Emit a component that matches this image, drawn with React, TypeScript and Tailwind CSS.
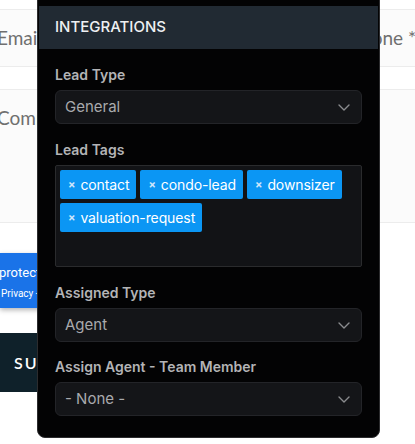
import React from 'react';

function Chevron() {
  return (
    <svg width="12" height="7" viewBox="0 0 12 7" fill="none" className="shrink-0">
      <path d="M1 1l5 5 5-5" stroke="#8a8b8e" strokeWidth="1.4" strokeLinecap="round" strokeLinejoin="round" />
    </svg>
  );
}

function Label({ children, className = '' }: { children: React.ReactNode; className?: string }) {
  return <div className={`h-5 leading-5 text-[14px] font-semibold text-[#b3b4b6] mb-[5px] ${className}`}>{children}</div>;
}

function Select({ value }: { value: string }) {
  return (
    <div className="h-[34px] flex items-center justify-between pl-[9px] pr-[11px] rounded-md bg-[#141518] border border-[#232428]">
      <span className="text-[15px] text-[#a9aaad]">{value}</span>
      <Chevron />
    </div>
  );
}

function Tag({ text }: { text: string }) {
  return (
    <span className="h-[29px] flex items-center gap-[5px] pl-[8px] pr-[7px] rounded-[2px] bg-[#0b96f4] text-white text-[14px] tracking-[-0.1px]">
      <span className="text-[11px] font-bold text-[#cfe6fb] leading-none">×</span>
      {text}
    </span>
  );
}

export default function App() {
  return (
    <div className="relative w-[415px] h-[444px] overflow-hidden bg-white" style={{ fontFamily: 'Lato, "Open Sans", sans-serif' }}>
      {/* ── background form ── */}
      <div className="pt-[9px]">
        <div className="h-[58px] flex justify-between items-center bg-[#fbfbfb] border-y border-[#ececec] text-[19px] text-[#6f6f6f]">
          <span className="-ml-[3px]">Email *</span>
          <span className="-mr-[1px]">Phone *</span>
        </div>
        <div className="h-[22px]" />
        <div className="h-[134px] bg-[#fbfbfb] border-y border-[#ececec] pt-[14px] text-[19px] text-[#6f6f6f]">
          <span className="-ml-[3px]">Comments</span>
        </div>
        <div className="h-[30px]" />
        <div className="w-[90px] h-[55px] bg-[#1a73e8] shadow-[0_2px_5px_rgba(0,0,0,0.3)] pt-[12px] text-white" style={{ fontFamily: 'Roboto, sans-serif' }}>
          <div className="text-[13px] leading-4 -ml-[1px]">protected</div>
          <div className="text-[10px] leading-4 mt-[5px] ml-[1px]">Privacy - Terms</div>
        </div>
        <div className="h-[25px]" />
        <div className="w-[120px] h-[59px] bg-[#0f212a] flex items-center pl-[14px] text-white text-[16px] font-semibold tracking-[2px]">SUBMIT</div>
      </div>

      {/* ── integrations panel ── */}
      <div
        className="absolute left-[37px] top-[-12px] w-[343px] h-[450px] bg-[#030304] border border-[#2c2c2e] rounded-lg p-px pt-[17px]"
        style={{ fontFamily: 'Inter, "Noto Sans", sans-serif' }}
      >
        <div className="h-[43px] bg-[#212a33] flex items-center pl-[16px] text-[15px] font-medium text-[#eef0f2]">INTEGRATIONS</div>
        <div className="px-[16px] pt-[16px]">
          <Label>Lead Type</Label>
          <Select value="General" />

          <Label className="mt-4">Lead Tags</Label>
          <div className="h-[102px] bg-[#121316] border border-[#2a2b2d] rounded-[2px] p-[4px] flex flex-wrap content-start gap-[4px]">
            {['contact', 'condo-lead', 'downsizer', 'valuation-request'].map(t => (
              <Tag key={t} text={t} />
            ))}
          </div>

          <Label className="mt-4">Assigned Type</Label>
          <Select value="Agent" />

          <Label className="mt-[15px]">Assign Agent - Team Member</Label>
          <Select value="- None -" />
        </div>
      </div>
    </div>
  );
}
